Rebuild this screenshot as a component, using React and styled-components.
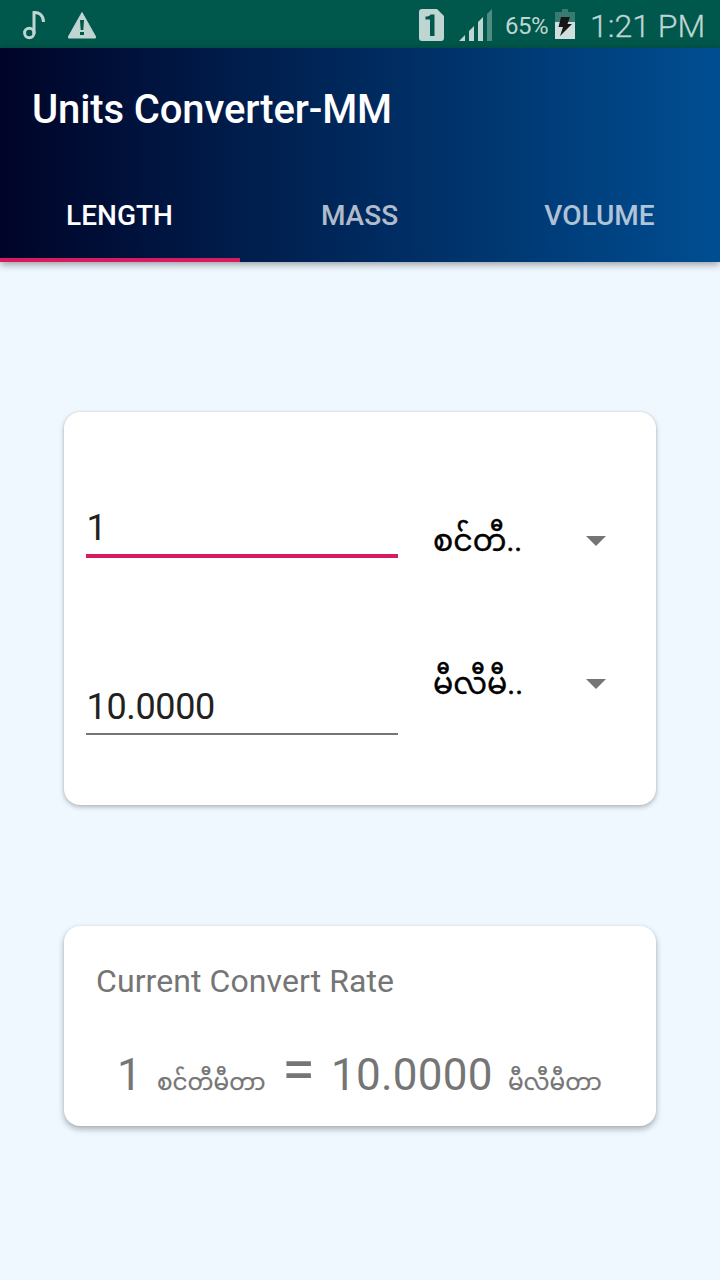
import React from "react";
import styled, { createGlobalStyle } from "styled-components";

const GlobalStyle = createGlobalStyle`
  * { box-sizing: border-box; }
  body {
    margin: 0;
    background: #eff7ff;
    font-family: Roboto, "Noto Sans Myanmar", "Noto Sans", sans-serif;
  }
`;

const Screen = styled.div`
  width: 720px;
  height: 1280px;
  overflow: hidden;
  display: flex;
  flex-direction: column;
  background: #eff7ff;
`;

const StatusBar = styled.header`
  height: 48px;
  flex: none;
  display: flex;
  justify-content: space-between;
  background: #00574b;
  color: #bfd5d2;
`;

const StatusIcons = styled.div`
  display: flex;
  align-items: flex-start;
`;

const BatteryLevel = styled.span`
  width: 56px;
  padding: 12px 0 0 8px;
  font-size: 24px;
  line-height: 28px;
  white-space: nowrap;
  letter-spacing: -0.5px;
`;

const Clock = styled.time`
  width: 130px;
  padding-top: 7px;
  font-size: 32px;
  font-weight: 300;
  line-height: 38px;
  white-space: nowrap;
  -webkit-text-stroke: 0.3px currentColor;
`;

const AppBar = styled.div`
  height: 214px;
  flex: none;
  display: flex;
  flex-direction: column;
  justify-content: space-between;
  background: linear-gradient(90deg, #000428, #004e92);
  box-shadow: 0 2px 8px rgba(0, 0, 0, 0.4);
`;

const Title = styled.h1`
  margin: 0;
  padding: 38px 32px 0;
  color: #fff;
  font-size: 40px;
  font-weight: 500;
  line-height: 48px;
  letter-spacing: -0.12px;
`;

const Tabs = styled.nav`
  display: grid;
  grid-template-columns: repeat(3, 1fr);
  height: 96px;
`;

const Tab = styled.button`
  border: 0;
  border-bottom: 4px solid ${(p) => (p.$active ? "#d81b60" : "transparent")};
  padding: 8px 1px 0 0;
  background: none;
  color: ${(p) => (p.$active ? "#fff" : "rgba(255, 255, 255, 0.7)")};
  font: 500 28px/34px Roboto, sans-serif;
`;

const Card = styled.section`
  width: 592px;
  flex: none;
  align-self: center;
  background: #fff;
  border-radius: 16px;
  box-shadow: 0 2px 5px rgba(0, 0, 0, 0.26), 0 0 2px rgba(0, 0, 0, 0.12);
`;

const ConverterCard = styled(Card)`
  height: 393px;
  margin-top: 150px;
  padding: 90px 22px 0;
`;

const UnitRow = styled.div`
  display: flex;
  align-items: flex-start;
  height: ${(p) => p.$height}px;
`;

const ValueField = styled.div`
  width: 312px;
  height: ${(p) => p.$height}px;
  padding-top: ${(p) => p.$inset}px;
  padding-left: 0.5px;
  border-bottom: ${(p) => (p.$focused ? "4px solid #d81b60" : "2px solid #757575")};
  color: #212121;
  font-size: 36px;
  line-height: 42px;
  letter-spacing: -0.35px;
`;

const UnitSelect = styled.div`
  flex: 1;
  display: flex;
  align-items: center;
  height: 50px;
  margin-top: 14px;
  padding-left: 35px;
  color: #000;
  font-size: 30px;
  line-height: 50px;
  -webkit-text-stroke: 0.4px currentColor;
`;

const UnitName = styled.span`
  width: 153px;
  overflow: hidden;
  white-space: nowrap;
`;

const RateCard = styled(Card)`
  height: 200px;
  margin-top: 121px;
  padding: 36px 32px 0;
  color: #757575;
  box-shadow: 0 3px 6px rgba(0, 0, 0, 0.3), 0 0 2px rgba(0, 0, 0, 0.08);
`;

const RateTitle = styled.h2`
  margin: 0;
  font-size: 32px;
  font-weight: 400;
  line-height: 38px;
  letter-spacing: 0.08px;
`;

const Rate = styled.div`
  display: flex;
  align-items: baseline;
  height: 70px;
  margin-top: 45px;
  padding-left: 21px;
  white-space: nowrap;
`;

const RateValue = styled.span`
  width: ${(p) => p.$width}px;
  font-size: 44px;
  line-height: 52px;
  letter-spacing: 0.25px;
`;

const RateUnit = styled.span`
  width: ${(p) => p.$width}px;
  font-size: 23.1px;
  line-height: 52px;
  -webkit-text-stroke: 0.25px currentColor;
`;

const Equals = styled.span`
  width: 49px;
  font-size: 60px;
  line-height: 50px;
`;

const LeftIcons = () => (
  <svg width="110" height="48" viewBox="0 0 110 48">
    <circle cx="29.3" cy="33" r="4.7" fill="none" stroke="#bfd5d2" strokeWidth="3" />
    <path d="M34 34V12.5C38.5 12 43.5 15 43.5 22" fill="none" stroke="#bfd5d2" strokeWidth="3" />
    <path d="M82 12.5 95.500 36.5V38H68.500V36.500Z" fill="#bfd5d2" stroke="#bfd5d2" strokeWidth="1" strokeLinejoin="round" />
    <path d="M80 20H84L83.300 30H80.700ZM80 32H84V35H80Z" fill="#00574b" />
  </svg>
);

const SimAndSignal = () => (
  <svg width="80" height="48" viewBox="0 0 80 48">
    <path d="M5 9H20L27 16V38Q27 41 24 41H5Q2 41 2 38V12Q2 9 5 9Z" fill="#bfd5d2" />
    <path d="M8.500 19.500V16.500Q12.500 16.500 13.500 14.500H17.500V36H13V19.500Z" fill="#00574b" />
    <path d="M42 41 48 35V41ZM52 31 57 26V41H52ZM61 22 66 17V41H61Z" fill="#bfd5d2" />
    <path d="M70 14 75 9V41H70Z" fill="#508b82" />
  </svg>
);

const Battery = () => (
  <svg width="37" height="48" viewBox="0 0 37 48">
    <path d="M2 12H9V9H15V12H22V22H2Z" fill="#3a7b71" />
    <path d="M2 22H22V39H2Z" fill="#cfdfdd" />
    <path d="M8 17H17L14.500 24H19L7 36 10 27H5.500Z" fill="#171717" />
  </svg>
);

const Caret = () => (
  <svg width="20" height="10" viewBox="0 0 20 10">
    <path d="M0 0H20L10 10Z" fill="#757575" />
  </svg>
);

export default function App() {
  return (
    <Screen>
      <GlobalStyle />
      <StatusBar>
        <LeftIcons />
        <StatusIcons>
          <SimAndSignal />
          <BatteryLevel>65%</BatteryLevel>
          <Battery />
          <Clock>1:21 PM</Clock>
        </StatusIcons>
      </StatusBar>
      <AppBar>
        <Title>Units Converter-MM</Title>
        <Tabs>
          <Tab $active>LENGTH</Tab>
          <Tab>MASS</Tab>
          <Tab>VOLUME</Tab>
        </Tabs>
      </AppBar>
      <ConverterCard>
        <UnitRow $height={143}>
          <ValueField $focused $height={56} $inset={5}>1</ValueField>
          <UnitSelect>
            <UnitName>စင်တီ..</UnitName>
            <Caret />
          </UnitSelect>
        </UnitRow>
        <UnitRow $height={120}>
          <ValueField $height={90} $inset={41}>10.0000</ValueField>
          <UnitSelect>
            <UnitName>မီလီမီ..</UnitName>
            <Caret />
          </UnitSelect>
        </UnitRow>
      </ConverterCard>
      <RateCard>
        <RateTitle>Current Convert Rate</RateTitle>
        <Rate>
          <RateValue $width={40}>1</RateValue>
          <RateUnit $width={125}>စင်တီမီတာ</RateUnit>
          <Equals>=</Equals>
          <RateValue $width={177}>10.0000</RateValue>
          <RateUnit $width={100}>မီလီမီတာ</RateUnit>
        </Rate>
      </RateCard>
    </Screen>
  );
}
